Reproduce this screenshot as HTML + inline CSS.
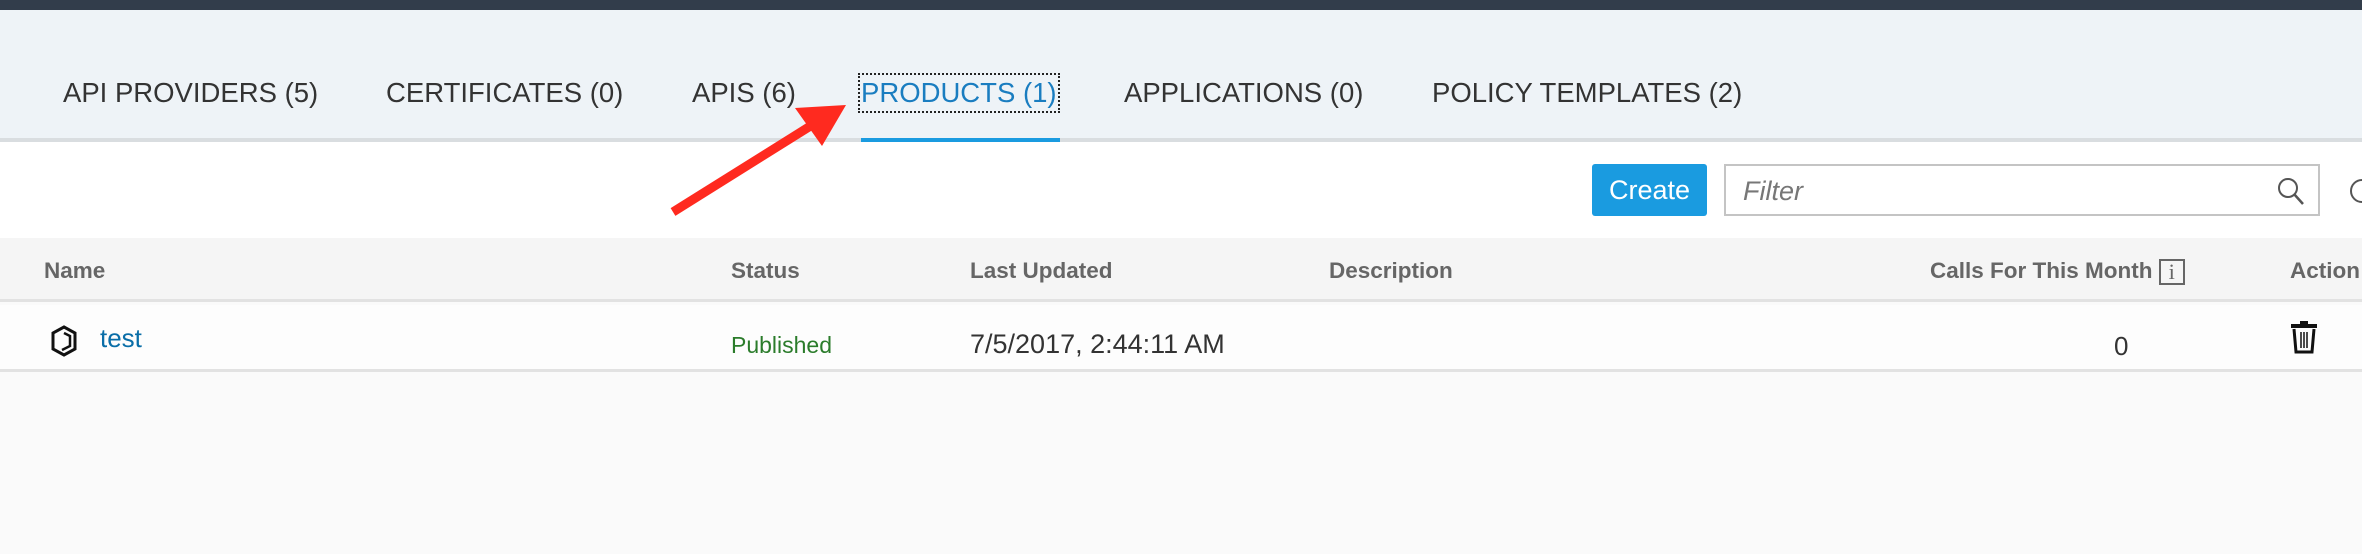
<!DOCTYPE html>
<html><head><meta charset="utf-8"><style>
*{margin:0;padding:0;box-sizing:border-box}
body{width:2362px;height:554px;overflow:hidden;background:#fafafa;font-family:"Liberation Sans",Arial,sans-serif;position:relative}
.top{position:absolute;left:0;top:0;width:2362px;height:10px;background:#323d4b}
.tabs{position:absolute;left:0;top:10px;width:2362px;height:128px;background:#eef3f7}
.tabline{position:absolute;left:0;top:138px;width:2362px;height:4px;background:#d9dde0}
.tab{position:absolute;top:76px;font-size:27.5px;color:#333;white-space:nowrap;line-height:34px}
.tool{position:absolute;left:0;top:142px;width:2362px;height:96px;background:#fff}
.btn{position:absolute;left:1592px;top:164px;width:115px;height:52px;background:#1a9be0;border-radius:3px;color:#fff;font-size:27px;line-height:52px;text-align:center}
.inp{position:absolute;left:1724px;top:164px;width:596px;height:52px;border:2px solid #c4c4c4;background:#fff}
.inp span{position:absolute;left:17px;top:10px;font-size:27px;font-style:italic;color:#777}
.hdr{position:absolute;left:0;top:238px;width:2362px;height:64px;background:#f5f5f5;border-bottom:3px solid #e2e2e2}
.h{position:absolute;top:20px;font-size:22.5px;font-weight:bold;color:#666;white-space:nowrap}
.row{position:absolute;left:0;top:305px;width:2362px;height:67px;background:#fdfdfd;border-bottom:3px solid #e2e2e2}
.c{position:absolute;white-space:nowrap}
</style></head><body>
<div class="top"></div>
<div class="tabs"></div>
<div class="tabline"></div>
<div class="tab" style="left:63px">API PROVIDERS (5)</div>
<div class="tab" style="left:386px">CERTIFICATES (0)</div>
<div class="tab" style="left:692px">APIS (6)</div>
<div class="tab" style="left:861px;color:#1a7dc0;outline:2px dotted #222;outline-offset:1px">PRODUCTS (1)</div>
<div style="position:absolute;left:861px;top:138px;width:199px;height:4px;background:#1a9be0"></div>
<div class="tab" style="left:1124px">APPLICATIONS (0)</div>
<div class="tab" style="left:1432px">POLICY TEMPLATES (2)</div>
<div class="tool"></div>
<div class="btn">Create</div>
<div class="inp"><span>Filter</span>
<svg style="position:absolute;right:12px;top:10px" width="30" height="30" viewBox="0 0 30 30"><circle cx="12" cy="12" r="9" fill="none" stroke="#555" stroke-width="2"/><path d="M18 18 L27 28" stroke="#555" stroke-width="2.5"/></svg></div>
<svg style="position:absolute;left:2348px;top:178px" width="14" height="26"><path d="M14 2 A11 11 0 0 0 14 24" fill="none" stroke="#555" stroke-width="2"/></svg>
<div class="hdr">
<div class="h" style="left:44px">Name</div>
<div class="h" style="left:731px">Status</div>
<div class="h" style="left:970px">Last Updated</div>
<div class="h" style="left:1329px">Description</div>
<div class="h" style="left:1930px">Calls For This Month <span style="display:inline-block;width:26px;height:26px;border:2px solid #666;font-family:'Liberation Serif',serif;font-weight:normal;text-align:center;line-height:22px;vertical-align:middle">i</span></div>
<div class="h" style="left:2290px">Action</div>
</div>
<div class="row">
<svg class="c" style="left:50px;top:20px" width="28" height="32" viewBox="0 0 28 32"><path d="M14 2 L25 8 V24 L14 30 L3 24 V8 Z" fill="none" stroke="#111" stroke-width="3"/><path d="M14 8 L20 11 V21 L12 25" fill="none" stroke="#111" stroke-width="2.5"/></svg>
<div class="c" style="left:100px;top:18px;font-size:26px;color:#0a6ea8">test</div>
<div class="c" style="left:731px;top:27px;font-size:23px;color:#2b7c2b">Published</div>
<div class="c" style="left:970px;top:24px;font-size:27px;color:#333">7/5/2017, 2:44:11 AM</div>
<div class="c" style="left:2114px;top:26px;font-size:26px;color:#333">0</div>
<svg class="c" style="left:2289px;top:15px" width="30" height="34" viewBox="0 0 30 34"><rect x="11" y="1" width="8" height="3" fill="#111"/><rect x="2" y="4" width="26" height="4" fill="#111"/><path d="M5 9 L7 32 H23 L25 9" fill="none" stroke="#111" stroke-width="3"/><path d="M12 12 V28 M15 12 V28 M18 12 V28" stroke="#111" stroke-width="1.5"/></svg>
</div>
<svg style="position:absolute;left:0;top:0" width="2362" height="554"><path d="M673 212 L812 125" stroke="#ff2a1f" stroke-width="9"/><path d="M846 105 L795 108 L822 146 Z" fill="#ff2a1f"/></svg>
</body></html>
